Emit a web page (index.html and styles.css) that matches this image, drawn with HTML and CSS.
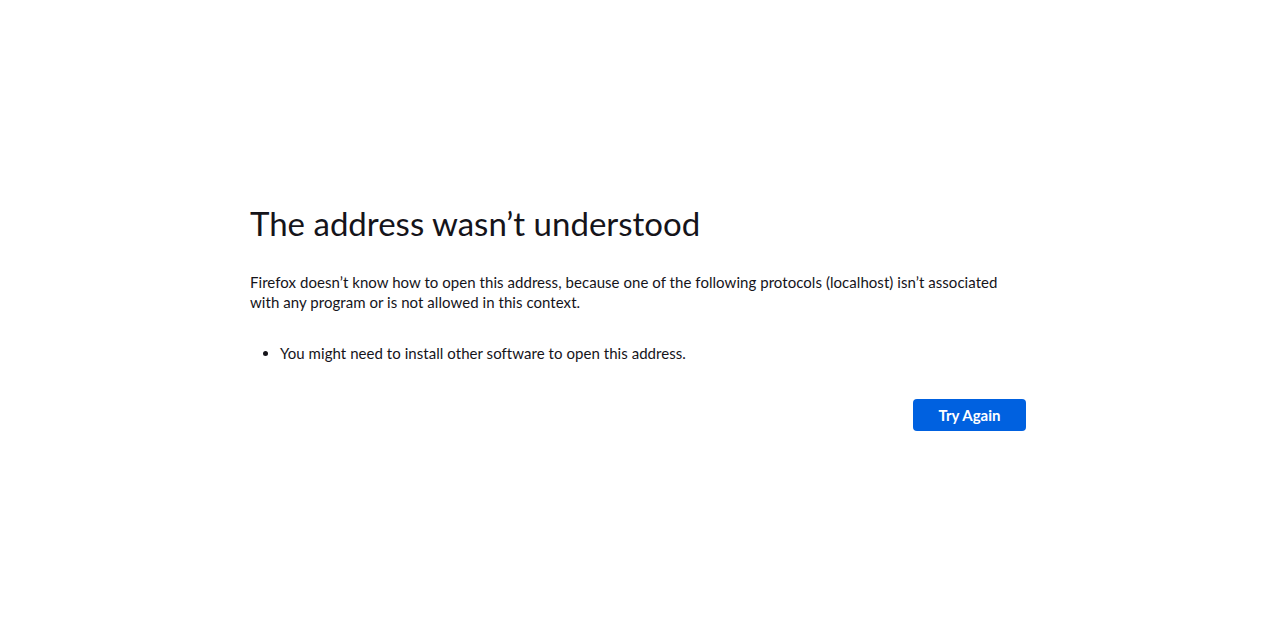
FILE: index.html
```html
<!DOCTYPE html>
<html lang="en">
<head>
<meta charset="utf-8">
<title>Problem loading page</title>
<link rel="stylesheet" href="styles.css">
</head>
<body>
<main class="container">
  <h1 class="title">The address wasn’t understood</h1>
  <p class="desc">Firefox doesn’t know how to open this address, because one of the following protocols (localhost) isn’t associated with any program or is not allowed in this context.</p>
  <ul class="list">
    <li>You might need to install other software to open this address.</li>
  </ul>
  <div class="actions">
    <button class="primary">Try Again</button>
  </div>
</main>
</body>
</html>
```
FILE: styles.css
```css
html, body {
  margin: 0;
  padding: 0;
  background: #fff;
  color: #15141a;
  font-family: Lato, "Noto Sans", sans-serif;
  font-size: 15px;
}
body {
  display: flex;
  justify-content: center;
  min-height: 639px;
  padding-right: 4px;
}
.container {
  width: 776px;
  padding-top: 200px;
}
.title {
  font-size: 33px;
  font-weight: 400;
  line-height: 46px;
  margin: 0 0 26px;
}
.desc {
  margin: 0;
  line-height: 20px;
  letter-spacing: 0.05px;
}
.list {
  margin: 31px 0 0;
  padding-left: 30px;
  line-height: 20px;
  letter-spacing: 0.05px;
}
.actions {
  display: flex;
  justify-content: flex-end;
  margin-top: 36px;
}
.primary {
  background: #0061e0;
  color: #fff;
  border: none;
  border-radius: 4px;
  font-family: inherit;
  font-size: 15px;
  font-weight: 700;
  width: 113px;
  height: 32px;
}
```
